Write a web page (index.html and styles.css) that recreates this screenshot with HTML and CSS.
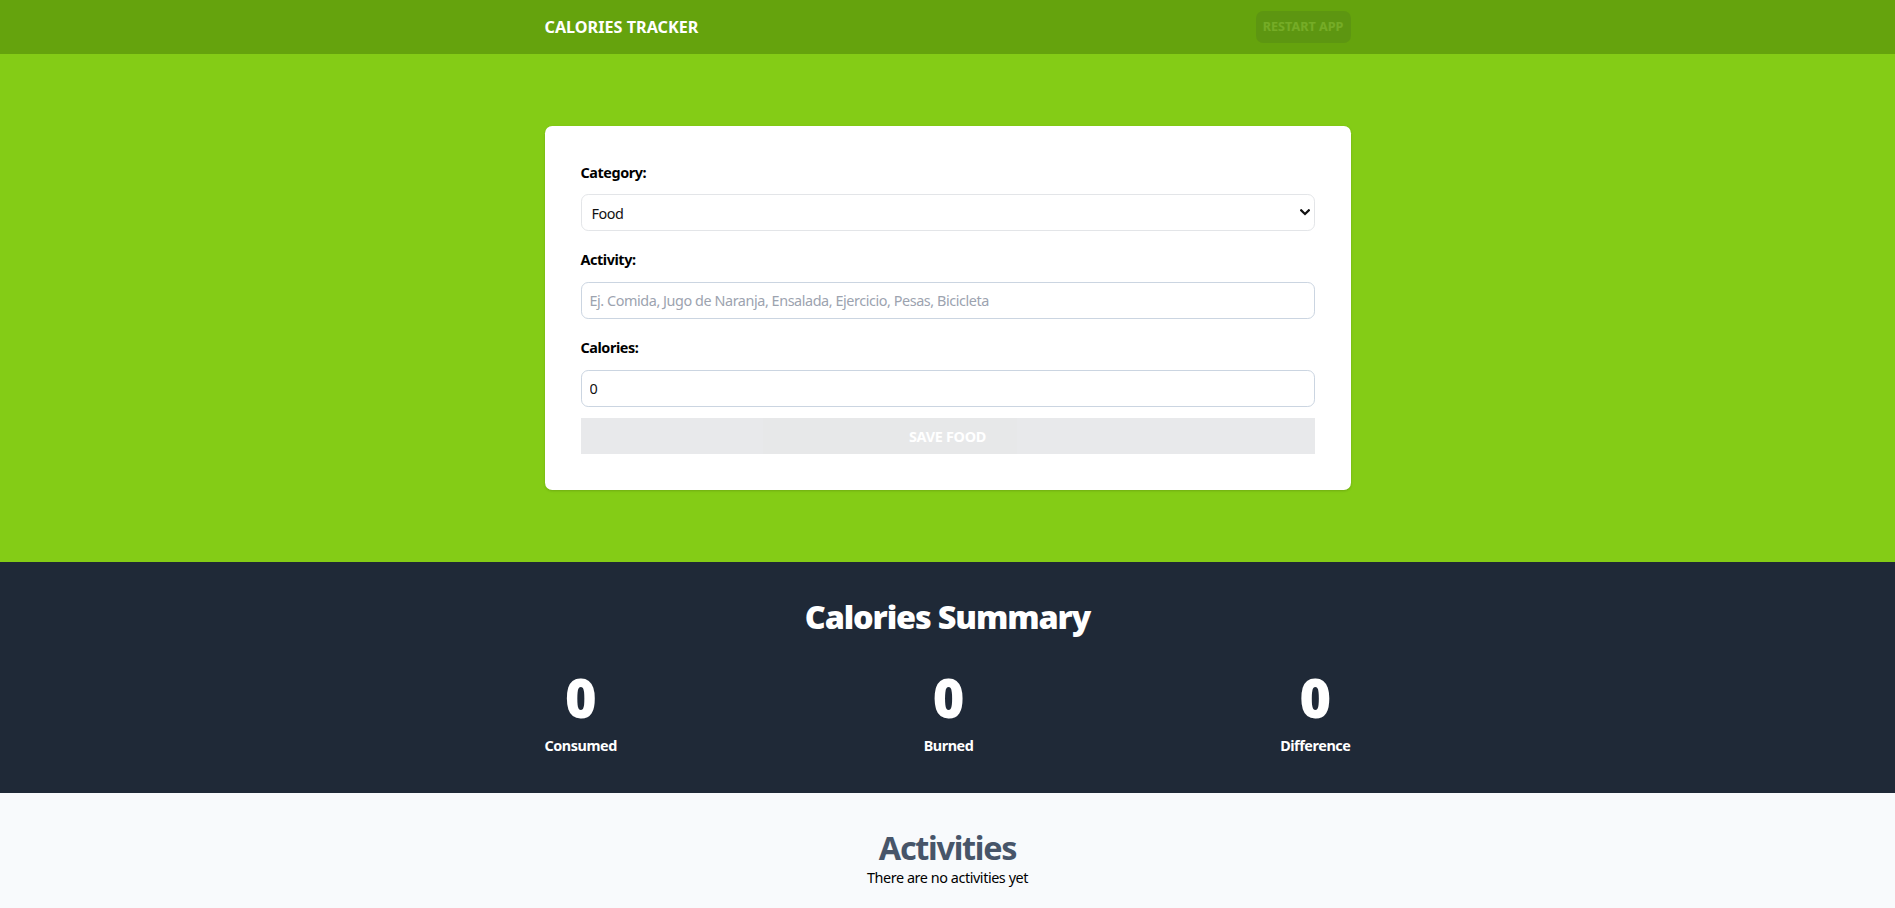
FILE: index.html
```html
<!DOCTYPE html>
<html lang="en">
<head>
<meta charset="utf-8">
<title>Calories Tracker</title>
<link rel="stylesheet" href="styles.css">
</head>
<body>
<header class="topbar">
  <div class="container topbar-inner">
    <h1 class="brand">Calories Tracker</h1>
    <button class="btn-restart" disabled>Restart App</button>
  </div>
</header>

<section class="hero">
  <div class="container">
    <form class="card">
      <div class="field">
        <label class="field-label" for="category">Category:</label>
        <div class="select-wrap">
          <select id="category" class="control control-select">
            <option>Food</option>
            <option>Exercise</option>
          </select>
          <svg class="select-arrow" width="10" height="7" viewBox="0 0 10 7" aria-hidden="true"><path d="M1.2 1.3 L5 5 L8.8 1.3" fill="none" stroke="#111" stroke-width="2.2" stroke-linecap="square"/></svg>
        </div>
      </div>
      <div class="field">
        <label class="field-label" for="name">Activity:</label>
        <input id="name" class="control" type="text" placeholder="Ej. Comida, Jugo de Naranja, Ensalada, Ejercicio, Pesas, Bicicleta">
      </div>
      <div class="field">
        <label class="field-label" for="calories">Calories:</label>
        <input id="calories" class="control control-num" type="number" value="0">
      </div>
      <input class="btn-save" type="submit" value="Save Food" disabled>
    </form>
  </div>
</section>

<section class="summary">
  <div class="container">
    <h2 class="summary-title">Calories Summary</h2>
    <div class="stats">
      <p class="stat"><span class="stat-num">0</span>Consumed</p>
      <p class="stat"><span class="stat-num">0</span>Burned</p>
      <p class="stat"><span class="stat-num">0</span>Difference</p>
    </div>
  </div>
</section>

<section class="activities">
  <h2 class="activities-title">Activities</h2>
  <p class="empty">There are no activities yet</p>
</section>
</body>
</html>
```

FILE: styles.css
```css
* { box-sizing: border-box; }

html, body {
  margin: 0;
  padding: 0;
}

body {
  background: #f8fafc;
  font-family: "Noto Sans", "Open Sans", "Liberation Sans", sans-serif;
  font-size: 14.4px;
  line-height: 21.6px;
  letter-spacing: -0.03em;
  color: #000;
}

.container {
  width: 806px;
  margin: 0 auto;
}

/* Header */
.topbar {
  background: #65a30d;
  padding: 10.8px 0;
}
.topbar-inner {
  display: flex;
  justify-content: space-between;
  align-items: center;
  height: 32.4px;
}
.brand {
  margin: 0;
  padding-top: 1px;
  font-size: 16.2px;
  line-height: 25.2px;
  font-weight: 700;
  color: #fff;
  text-transform: uppercase;
  letter-spacing: 0;
}
.btn-restart {
  font-family: inherit;
  background: #1f2937;
  color: #fff;
  border: none;
  border-radius: 7.2px;
  padding: 7.2px;
  font-size: 12.6px;
  line-height: 18px;
  font-weight: 700;
  text-transform: uppercase;
  letter-spacing: 0;
  opacity: 0.1;
}

/* Hero / form */
.hero {
  background: #84cc16;
  padding: 72px 18px;
}
.card {
  background: #fff;
  border-radius: 7.2px;
  padding: 36px;
  box-shadow: 0 1px 3px rgba(0,0,0,0.1), 0 1px 2px rgba(0,0,0,0.06);
  display: flex;
  flex-direction: column;
}
.field {
  display: grid;
  gap: 10.8px;
  margin-bottom: 18px;
}
.field:nth-child(3) {
  margin-bottom: 11px;
}
.field-label {
  font-weight: 700;
  font-size: 14.4px;
  line-height: 21.6px;
}
.control {
  font-family: inherit;
  font-size: 14.4px;
  letter-spacing: -0.03em;
  width: 100%;
  height: 37.6px;
  border: 1px solid #cbd5e1;
  border-radius: 7.2px;
  padding: 0 8px;
  background: #fff;
  color: #111;
  outline: none;
}
.control::placeholder {
  color: #9ca3af;
}
.control-num::-webkit-inner-spin-button,
.control-num::-webkit-outer-spin-button {
  -webkit-appearance: none;
  margin: 0;
}
.select-wrap {
  position: relative;
}
.control-select {
  -webkit-appearance: none;
  appearance: none;
  border-color: #e3e5e8;
  padding-left: 10px;
  padding-top: 1px;
  height: 37px;
}
.select-arrow {
  position: absolute;
  right: 5px;
  top: 15px;
  pointer-events: none;
}
.btn-save {
  font-family: inherit;
  width: 100%;
  height: 36px;
  border: none;
  background: #1f2937;
  color: #fff;
  font-size: 14.4px;
  font-weight: 700;
  letter-spacing: -0.02em;
  text-transform: uppercase;
  opacity: 0.1;
  padding: 0;
}

/* Summary */
.summary {
  background: #1f2937;
  padding: 36px 0;
}
.summary-title {
  margin: 0;
  text-align: center;
  color: #fff;
  font-size: 32.4px;
  line-height: 36px;
  font-weight: 900;
  letter-spacing: -0.035em;
}
.stats {
  display: flex;
  justify-content: space-between;
  margin-top: 36px;
}
.stat {
  margin: 0;
  display: grid;
  gap: 10.8px;
  text-align: center;
  color: #fff;
  font-weight: 700;
}
.stat-num {
  font-size: 54px;
  line-height: 54px;
  font-weight: 900;
  letter-spacing: 0;
}

/* Activities */
.activities {
  padding: 36px 36px 16px;
  text-align: center;
}
.activities-title {
  margin: 0;
  font-size: 32.4px;
  line-height: 36px;
  font-weight: 700;
  color: #475569;
  letter-spacing: -0.04em;
}
.empty {
  margin: 2px 0 0;
}
```
